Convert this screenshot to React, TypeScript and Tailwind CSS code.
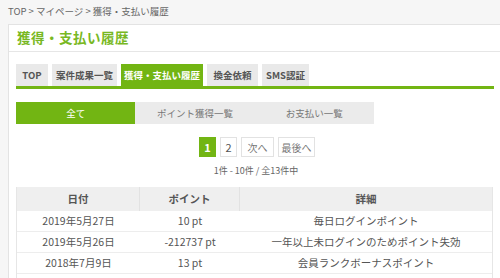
import React from "react";

const green = "bg-[#72b513]";

export default function App() {
  const rows = [
    ["2019年5月27日", "10 pt", "毎日ログインポイント"],
    ["2019年5月26日", "-212737 pt", "一年以上未ログインのためポイント失効"],
    ["2018年7月9日", "13 pt", "会員ランクボーナスポイント"],
    ["", "", ""],
  ];
  return (
    <div
      className="w-[500px] h-[278px] overflow-hidden bg-[#f6f6f6] text-[#555]"
      style={{ fontFamily: '"Noto Sans CJK JP", "Noto Sans", sans-serif' }}
    >
      <div className="h-[24px] pl-[8px] pt-[5px] text-[9.5px] leading-[13px] text-[#666]">
        TOP &gt; マイページ &gt; 獲得・支払い履歴
      </div>
      <div className="ml-[8px] bg-white border-y border-l border-[#e3e3e3] h-[260px]">
        <div className="h-[27px] border-b border-[#e6e6e6] pl-[8px] flex items-center">
          <span className="text-[13.5px] font-bold text-[#78b823] leading-none tracking-[0.5px]">獲得・支払い履歴</span>
        </div>
        <div className="px-[7px] pr-[6px] pt-[12px]">
          <div className="flex gap-[4px] border-b-[3px] border-[#72b513]">
            {[
              ["TOP", "w-[32px]"],
              ["案件成果一覧", "w-[65px]"],
              ["獲得・支払い履歴", "w-[82px]"],
              ["換金依頼", "w-[51px]"],
              ["SMS認証", "w-[47px]"],
            ].map(([t, w], i) => (
              <div
                key={t}
                className={`${w} h-[22px] flex items-center justify-center text-[9.5px] font-bold ${
                  i === 2 ? `${green} text-white` : "bg-[#e9e9e9] text-[#555]"
                }`}
              >
                {t}
              </div>
            ))}
          </div>
          <div className="mt-[13px] w-[358px] h-[22px] flex bg-[#ebebeb] text-[9.5px]">
            <div className={`flex-1 flex items-center justify-center ${green} text-white`}>全て</div>
            <div className="flex-1 flex items-center justify-center text-[#777]">ポイント獲得一覧</div>
            <div className="flex-1 flex items-center justify-center text-[#777]">お支払い一覧</div>
          </div>
          <div className="mt-[13px] flex justify-center gap-[4px] pl-[4px] text-[11px]">
            <div className={`w-[17px] h-[20px] ${green} text-white font-bold flex items-center justify-center`}>1</div>
            <div className="w-[17px] h-[20px] border border-[#e2e2e2] flex items-center justify-center text-[#555]">2</div>
            <div className="w-[33px] h-[20px] border border-[#e2e2e2] flex items-center justify-center text-[10px] text-[#777]">次へ</div>
            <div className="w-[37px] h-[20px] border border-[#e2e2e2] flex items-center justify-center text-[10px] text-[#777]">最後へ</div>
          </div>
          <div className="mt-[8px] text-center text-[9px] leading-[12px] text-[#666] pl-[2px]">1件 - 10件 / 全13件中</div>
          <div className="mt-[10px] w-[477px] border-x border-[#e6e6e6] text-[10.5px]">
            <div className="flex h-[24px] bg-[#efefef] font-bold text-[#555]">
              <div className="w-[123px] flex items-center justify-center border-r border-[#e2e2e2]">日付</div>
              <div className="w-[100px] flex items-center justify-center border-r border-[#e2e2e2]">ポイント</div>
              <div className="flex-1 flex items-center justify-center">詳細</div>
            </div>
            {rows.map((r, i) => (
              <div key={i} className="flex h-[21px] border-b border-[#ededed] text-[#555]">
                <div className="w-[123px] flex items-center justify-center">{r[0]}</div>
                <div className="w-[100px] flex items-center justify-center">{r[1]}</div>
                <div className="flex-1 flex items-center justify-center">{r[2]}</div>
              </div>
            ))}
          </div>
        </div>
      </div>
    </div>
  );
}
